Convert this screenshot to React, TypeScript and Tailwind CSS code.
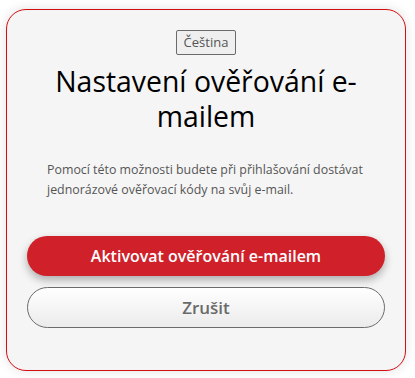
import React from "react";

export default function App() {
  return (
    <div className="w-[415px] h-[378px] bg-white overflow-hidden" style={{ fontFamily: '"Open Sans", sans-serif' }}>
      <div className="ml-[6px] mt-[9px] w-[400px] h-[362px] rounded-[20px] border border-[#d40d12] bg-[#f5f5f5] shadow-[0_0_12px_rgba(0,0,0,0.12)] px-[20px] pt-[20px] flex flex-col">
        <div className="flex justify-center">
          <button className="h-[25px] px-[7px] border border-[#6b6b6b] rounded-[2px] bg-[#efefef] text-[13px] text-[#555] leading-none">
            Čeština
          </button>
        </div>
        <h1 className="mt-[9px] px-[26px] text-center text-[28.4px] leading-[35px] text-black font-normal">
          Nastavení ověřování e-mailem
        </h1>
        <p className="mt-[26px] px-[20px] text-[12.4px] leading-[20px] text-[#555]">
          Pomocí této možnosti budete při přihlašování dostávat jednorázové ověřovací kódy na svůj e-mail.
        </p>
        <button className="mt-[36px] h-[40px] w-full rounded-full bg-[#d0202a] text-white text-[16px] font-semibold shadow-[0_4px_8px_rgba(0,0,0,0.3)]">
          Aktivovat ověřování e-mailem
        </button>
        <button className="mt-[11px] h-[41px] w-full rounded-full border border-[#6b6b6b] bg-gradient-to-b from-white to-[#ebebeb] text-[#6a6a6a] text-[17px] font-semibold">
          Zrušit
        </button>
      </div>
    </div>
  );
}
